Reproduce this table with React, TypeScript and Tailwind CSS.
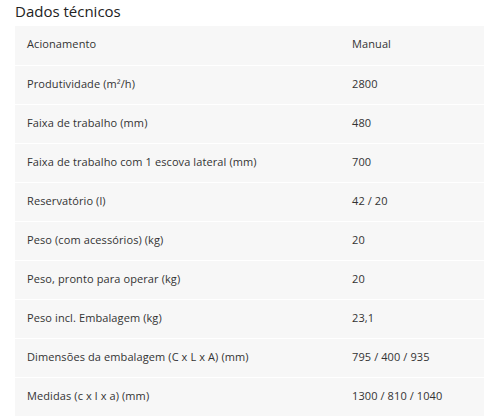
const ROWS: [string, string][] = [
  ["Acionamento", "Manual"],
  ["Produtividade (m²/h)", "2800"],
  ["Faixa de trabalho (mm)", "480"],
  ["Faixa de trabalho com 1 escova lateral (mm)", "700"],
  ["Reservatório (l)", "42 / 20"],
  ["Peso (com acessórios) (kg)", "20"],
  ["Peso, pronto para operar (kg)", "20"],
  ["Peso incl. Embalagem (kg)", "23,1"],
  ["Dimensões da embalagem (C x L x A) (mm)", "795 / 400 / 935"],
  ["Medidas (c x l x a) (mm)", "1300 / 810 / 1040"],
];

export default function App() {
  return (
    <div className="h-[416px] w-[484px] overflow-hidden bg-white pl-[15px] font-['Open_Sans',sans-serif] text-[#333]">
      <h2 className="h-[26px] pt-[1px] text-[15px] leading-[20px] text-[#222]">Dados técnicos</h2>
      <div className="flex flex-col">
        {ROWS.map(([label, value], i) => (
          <div
            key={label}
            className={`grid h-[39px] grid-cols-[325px_1fr] items-center bg-[#f7f7f7] pb-[2px] text-[11px] tracking-[0.1px] ${
              i > 0 ? "border-t border-white" : "h-[38px]"
            }`}
          >
            <span className="pl-3">{label}</span>
            <span className="pl-3">{value}</span>
          </div>
        ))}
      </div>
    </div>
  );
}
